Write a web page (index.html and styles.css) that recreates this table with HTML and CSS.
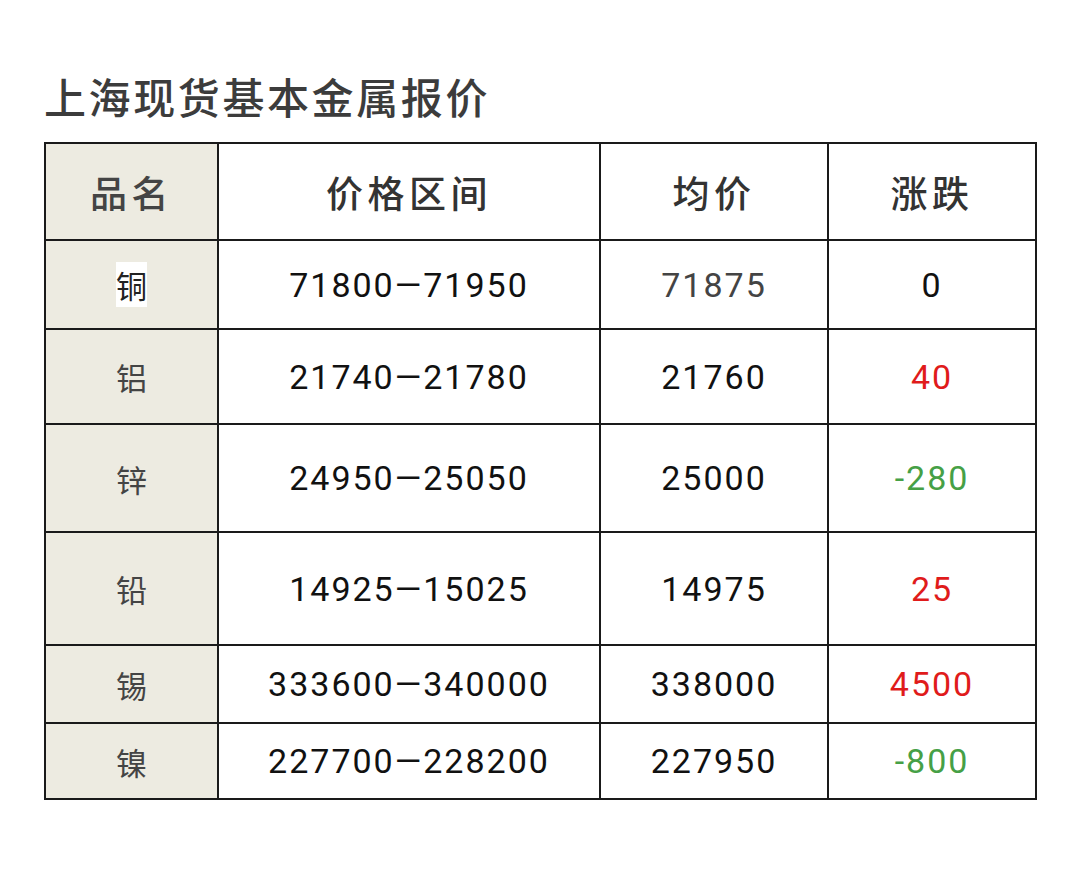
FILE: index.html
```html
<!DOCTYPE html>
<html lang="zh">
<head>
<meta charset="utf-8">
<title>上海现货基本金属报价</title>
<link rel="stylesheet" href="styles.css">
</head>
<body>
<div class="page">
  <h1 class="title">上海现货基本金属报价</h1>
  <table class="quote">
    <colgroup>
      <col class="c-name"><col class="c-range"><col class="c-avg"><col class="c-chg">
    </colgroup>
    <thead>
      <tr class="head">
        <th class="name">品名</th><th>价格区间</th><th>均价</th><th>涨跌</th>
      </tr>
    </thead>
    <tbody>
      <tr class="r1"><td class="name"><span class="hl">铜</span></td><td>71800—71950</td><td class="grey">71875</td><td>0</td></tr>
      <tr class="r2"><td class="name">铝</td><td>21740—21780</td><td>21760</td><td class="up">40</td></tr>
      <tr class="r3"><td class="name">锌</td><td>24950—25050</td><td>25000</td><td class="down">-280</td></tr>
      <tr class="r4"><td class="name">铅</td><td>14925—15025</td><td>14975</td><td class="up">25</td></tr>
      <tr class="r5"><td class="name">锡</td><td>333600—340000</td><td>338000</td><td class="up">4500</td></tr>
      <tr class="r6"><td class="name">镍</td><td>227700—228200</td><td>227950</td><td class="down">-800</td></tr>
    </tbody>
  </table>
</div>
</body>
</html>
```
FILE: styles.css
```css
html, body { margin: 0; padding: 0; background: #fff; }
.page {
  padding: 71px 44px 0 44px;
  font-family: Roboto, "Noto Sans CJK SC", sans-serif;
}
.title {
  margin: 0 0 21px 0;
  font-family: "Noto Sans CJK SC", sans-serif;
  font-weight: 500;
  font-size: 42px;
  line-height: 50px;
  letter-spacing: 2.6px;
  color: #3c3c3c;
}
.quote {
  border-collapse: collapse;
  width: 992px;
  table-layout: fixed;
}
.c-name { width: 173px; }
.c-range { width: 382px; }
.c-avg { width: 228px; }
.c-chg { width: 208px; }
.quote th, .quote td {
  border: 2px solid #1a1a1a;
  text-align: center;
  vertical-align: middle;
  padding: 0;
}
.quote th {
  font-family: "Noto Sans CJK SC", sans-serif;
  font-weight: 500;
  font-size: 37px;
  letter-spacing: 4.5px;
  color: #333;
}
.quote td {
  font-size: 34px;
  letter-spacing: 2px;
  color: #111;
}
.quote .name {
  background: #edebe1;
  font-family: "Noto Sans CJK SC", sans-serif;
  color: #444;
}
.quote td.name { font-size: 31px; letter-spacing: 0; }
.hl { background: #fff; color: #222; }
.grey { color: #444 !important; }
.up { color: #e01b1b !important; }
.down { color: #46a046 !important; }
.head { height: 97px; }
.r1 { height: 89px; }
.r2 { height: 95px; }
.r3 { height: 108px; }
.r4 { height: 113px; }
.r5 { height: 78px; }
.r6 { height: 76px; }
```
